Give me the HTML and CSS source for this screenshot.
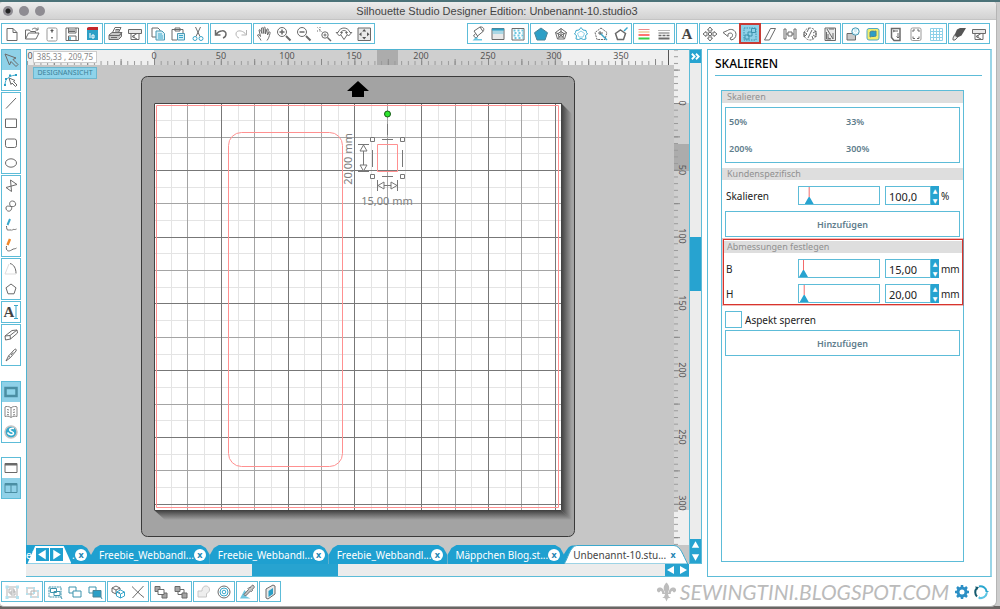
FILE: index.html
```html
<!DOCTYPE html>
<html lang="de">
<head>
<meta charset="utf-8">
<title>Silhouette Studio Designer Edition: Unbenannt-10.studio3</title>
<link rel="stylesheet" href="styles.css">
</head>
<body>
<div class="window">
  <header class="titlebar">
    <div class="lights"><i class="light light-close"></i><i class="light"></i><i class="light"></i></div>
    <h1 class="title">Silhouette Studio Designer Edition: Unbenannt-10.studio3</h1>
  </header>

  <nav class="toolbar toolbar-top">
    <div class="bar">
      <div class="group">
        <button aria-label="Neu"><svg viewBox="0 0 18 18"><path d="M4 3.500h6l4 4v8H4zM10 3.500v4h4"/></svg></button>
        <button aria-label="Öffnen"><svg viewBox="0 0 18 18"><path d="M2.500 14V5h4l1 1.500h5V8M2.500 14l3-6h10.500l-3 6zM9 4.500c2-2 4-1.500 5.500 0M15 2.500v2.500h-2.500"/></svg></button>
        <button aria-label="Bibliothek"><svg viewBox="0 0 18 18"><rect x="4" y="3" width="10" height="13" rx="1.500" stroke="#999"/><path class="dark" d="M9 4l2 2H7zM8.300 6h1.400v1.500H8.300zM8.300 12h1.400v1.500H8.300z"/></svg></button>
        <button aria-label="Speichern"><svg viewBox="0 0 18 18"><path d="M3 3h12.500v12.500H3zM5.500 3v5h7.500V3M5.500 15.500V11h7.500v4.500M6 5h6M6 6.500h6"/><path class="sky" d="M6 12h2v3H6z"/></svg></button>
        <button aria-label="In Bibliothek speichern"><svg viewBox="0 0 18 18"><path class="blue" d="M4 3l2-1h9v13H4z"/><path class="redfill" d="M4 3l2-1h9v3H4z"/><path class="white" d="M7 8v5M9 10h2v3H9z"/></svg></button>
      </div>
      <div class="group">
        <button aria-label="Drucken"><svg viewBox="0 0 18 18"><path class="mid" d="M3 10l3-2.500h10l-2.500 3H3zM3 10.500v4h9.500l3-3V8l-3 3"/><path d="M6.500 7.500L9 2.500h6l-2.500 5M9.500 4.500h4M9 6h4M5 12.500h6"/></svg></button>
        <button aria-label="Schneiden"><svg viewBox="0 0 18 18"><path class="pale" d="M2.500 4.500h13v4h-13z"/><path d="M5 8.500v6h8v-6M11 8.500l-5 3 5 2.500M8 10v3"/></svg></button>
      </div>
      <div class="group">
        <button aria-label="Kopieren"><svg viewBox="0 0 18 18"><path class="wf" d="M3 3h6l2 2v7H3z"/><path class="tint" d="M7 6h6l2.500 2.500V15H7z"/><path class="bl" d="M9 9h4M9 11h5M9 13h5"/></svg></button>
        <button aria-label="Einfügen"><svg viewBox="0 0 18 18"><path d="M3 4.500h11V8M3 4.500V15h5M6 4.500V3h5v3H6z"/><path class="tint" d="M8.500 8.500h7V15h-7z"/><path class="bl" d="M10 10.500h4M10 12.500h4"/></svg></button>
        <button aria-label="Ausschneiden"><svg viewBox="0 0 18 18"><path d="M6.500 2l4.500 9.500M11.500 2L7 11.500"/><circle class="bl" cx="6" cy="13.500" r="2"/><circle class="bl" cx="12" cy="13.500" r="2"/></svg></button>
      </div>
      <div class="group">
        <button aria-label="Rückgängig"><svg viewBox="0 0 18 18"><path class="thick" d="M3.500 5v5h5M4 9.500C7 5 14 4.500 14 9c0 2-1.500 3.500-3 4"/></svg></button>
        <button aria-label="Wiederholen"><svg class="faint" viewBox="0 0 18 18"><path d="M14.500 5v5h-5M14 9.500C11 5 4 4.500 4 9c0 2 1.500 3.500 3 4"/></svg></button>
      </div>
      <div class="group">
        <button aria-label="Verschieben"><svg viewBox="0 0 18 18"><path d="M6 15.500c-1-2.500-3-4-3.500-5.500 1-1 2 0 3 1.500L4 5c1-.8 1.500 0 2 1l1 2.500L6.500 3C7.500 2 8 3 8.200 4l.6 4.500V2.500c1-.8 1.700 0 1.500 1L10.500 9l1.500-5c1-.5 1.500 0 1.200 1L12.500 10l1.500-3c1-.3 1.500.5 1 1.500-1 3-1 4.500-3 7"/></svg></button>
        <button aria-label="Vergrößern"><svg viewBox="0 0 18 18"><circle cx="7" cy="7" r="4.500"/><path class="heavy" d="M11 11l4.500 4.500"/><path class="thick" d="M4.500 7h5M7 4.500v5"/></svg></button>
        <button aria-label="Verkleinern"><svg viewBox="0 0 18 18"><circle cx="7" cy="7" r="4.500"/><path class="heavy" d="M11 11l4.500 4.500"/><path class="thick" d="M4.500 7h5"/></svg></button>
        <button aria-label="Auswahl zoomen"><svg viewBox="0 0 18 18"><circle cx="10" cy="10" r="3.200"/><path class="thick" d="M12.500 12.500l3.500 3.500"/><path stroke-dasharray="1 1.500" d="M2 6h5M5 2v5M2.500 2.500l4 4"/><path d="M8.500 10h3M10 8.500v3"/></svg></button>
        <button aria-label="Zoom ziehen"><svg viewBox="0 0 18 18"><path d="M3 7.500c1-3 3.500-4.500 6-4.500s5 1.500 6 4.500h1.800L13.500 11 10.500 7.500h2C11.500 6 10 5.500 9 5.500S6.500 6 5.500 7.500h2L4.500 11 1.200 7.500zM6 10l3 4.500 3-4.500"/></svg></button>
        <button aria-label="Einpassen"><svg viewBox="0 0 18 18"><path class="pale" d="M3 3h12.500v12.500H3z"/><path class="dark" d="M9.200 4l2 2.500h-4zM9.200 14.500l2-2.500h-4zM4 9.200l2.500-2v4zM14.500 9.200l-2.500-2v4z"/></svg></button>
      </div>
    </div>
    <div class="bar">
      <div class="group">
        <button aria-label="Füllfarbe"><svg viewBox="0 0 18 18"><path d="M5 6l6-4 3 4.500L8.500 11zM11 2c3-.5 5 2 3 4.500M6.500 8.500L4.500 11l2.500 2 2-2"/><path class="sky" d="M3.500 15.500l3-3h3l-1.500 1.500h5v1.500z"/></svg></button>
        <button aria-label="Verlauf"><svg viewBox="0 0 18 18"><path class="pale" d="M3 3.500h12v11H3z"/><path class="sky" d="M3.500 4h11v5h-11z" opacity=".5"/><path class="blue" d="M3 3.500h12v2H3z"/></svg></button>
        <button aria-label="Muster"><svg viewBox="0 0 18 18"><path d="M3 3.500h12v11.500H3z"/><path class="skydots" d="M4.500 5.500h10M5.500 8h9M4.500 10.500h10M5.500 13h9"/></svg></button>
      </div>
      <div class="group">
        <button aria-label="Füllung Polygon"><svg viewBox="0 0 18 18"><path class="bluefill" d="M9 3l6.500 4.700L13 15H5L2.500 7.700z"/></svg></button>
        <button aria-label="Wabe"><svg viewBox="0 0 18 18"><path d="M9 3.500l5.500 4-2 6.500h-7l-2-6.500zM9 6.500l3 2-1 3.500H7L6 8.500zM9 3.500V9M3.500 7.500L9 10M14.500 7.500L9 10M5.500 14L9 10M12.500 14L9 10"/></svg></button>
        <button aria-label="Schatten"><svg viewBox="0 0 18 18"><path class="bl" d="M9 2.500l2 2.500 3 .5.500 2 1 1.500-2 1.500.5 3.500-2.500.5-2.500-1-2.500 1-2.500-.5.500-3.500-2-1.500 1-1.500.5-2 3-.5z"/><path class="sl" d="M9 6l3.500 2.500-1.500 3.500H7L5.500 8.500z"/></svg></button>
        <button aria-label="Skizze"><svg viewBox="0 0 18 18"><path stroke-dasharray="2 .8" d="M9 3l6 4.500-2 7H5l-2-7z"/><path class="bl thick" d="M8 8l7 7"/><path d="M6 8h5M8 6v4"/></svg></button>
        <button aria-label="Strass"><svg viewBox="0 0 18 18"><path class="thick" d="M8.500 5l5 3.500-2 6h-6l-2-6z"/><path class="bl thick" d="M12 6l3.500-3.500"/></svg></button>
      </div>
      <div class="group">
        <button aria-label="Linienfarbe"><svg viewBox="0 0 18 18"><path stroke="#ee8a8a" d="M3.500 4.500h11"/><path stroke="#e5b46a" d="M3.500 7h11"/><path stroke="#ff4545" stroke-width="1.500" d="M3.500 10h11"/><path stroke="#38d048" stroke-width="2" d="M3.500 13.500h11"/></svg></button>
        <button aria-label="Linienstil"><svg viewBox="0 0 18 18"><path stroke-dasharray="1 1" d="M3.500 5.500h11"/><path d="M3.500 8h11"/><path class="thick" stroke-dasharray="3 1" d="M3.500 10.500h11"/><path class="heavy" d="M3.500 13.500h11"/></svg></button>
      </div>
      <div class="group"><button class="serif" aria-label="Textstil">A</button></div>
      <div class="group">
        <button aria-label="Bewegen"><svg viewBox="0 0 18 18"><path d="M9 2l2.500 3H10v2.500H8V5H6.500zM9 16l2.500-3H10v-2.500H8V13H6.500zM2 9l3-2.500V8h2.500v2H5v1.500zM16 9l-3-2.500V8h-2.500v2H13v1.500z"/></svg></button>
        <button aria-label="Drehen"><svg viewBox="0 0 18 18"><path d="M2 7.500l5 4V9c2.500-2 5-.5 4.500 1.500 0 1.500-1 2-2.500 2.500l1 2c3-.5 5-2.500 5-5.500 0-4.500-5-6.500-8.500-4z"/></svg></button>
        <button class="on marked" aria-label="Skalieren"><svg class="teal" viewBox="0 0 18 18"><path stroke-dasharray="1.500 1" d="M3 3h12v12H3z"/><path d="M4 10h4v4H4zM7 7h4v4H7zM10.500 3.500h4v4h-4z"/></svg></button>
        <button aria-label="Neigen"><svg viewBox="0 0 18 18"><path d="M9.500 3.500h5l-6 11.500h-5z"/></svg></button>
        <button aria-label="Ausrichten"><svg viewBox="0 0 18 18"><path d="M3 4v10h2V4zM13 4v10h2V4zM7 7h4v4H7zM5 9h2M11 9h2"/></svg></button>
        <button aria-label="Replizieren"><svg viewBox="0 0 18 18"><path stroke-dasharray="2 1" d="M9 3a6 6 0 1 0 .1 0"/><path d="M6 9l-3 3V7zM11 5L7 13M12 8l3-2v6l-3-2M8 3L6 7M12 14l-1-3"/></svg></button>
        <button aria-label="Verschachteln"><svg viewBox="0 0 18 18"><path class="pale" d="M4 3h10.500v12.500H4z"/><path d="M6 4l6 10V8M8 4h5M5.500 7v7h4M7 9v4l3 1"/></svg></button>
      </div>
      <div class="group">
        <button aria-label="Modifizieren"><svg viewBox="0 0 18 18"><path class="mid" d="M3 8.500h8.500V15H3z"/><circle class="tint" cx="11.500" cy="6.500" r="3.700"/><path class="white" d="M9.500 5v2l2 1 2-1V5"/></svg></button>
        <button aria-label="Nachzeichnen"><svg viewBox="0 0 18 18"><rect class="yellow" x="3" y="3.500" width="12" height="11.500" rx="2"/><path class="bluefill" d="M6 7c2-2 4 0 6-1v5c-2 1-4 0-6 1z"/></svg></button>
      </div>
      <div class="group">
        <button aria-label="Seite"><svg viewBox="0 0 18 18"><path class="thick" d="M4.500 3.500h8.500v12H7l-2.500-3z"/><path d="M7 6h4M6 5l1.500 1L6 7M11 8v5M9.500 11.500L11 13l1.500-1.500"/></svg></button>
        <button aria-label="Passmarken"><svg viewBox="0 0 18 18"><rect x="4" y="3" width="10" height="12.500" rx="1.500" stroke="#999"/><path d="M6 7V5h2M12 7V5h-2M6 11.500v2h2M12 11.500v2h-2"/></svg></button>
        <button aria-label="Raster"><svg viewBox="0 0 18 18"><path class="sl" d="M3.500 3.500h12v12h-12zM6.500 3.500v12M9.500 3.500v12M12.500 3.500v12M3.500 6.500h12M3.500 9.500h12M3.500 12.500h12"/></svg></button>
      </div>
      <div class="group">
        <button aria-label="Schneideeinstellungen"><svg viewBox="0 0 18 18"><path class="dark" d="M7 4.500l3-1.500h6l-4.500 7.500-4 2L4.500 10z"/><path class="pale" d="M4.500 10l3 2.500L5 15H3v-2z"/></svg></button>
        <button aria-label="An Silhouette senden"><svg viewBox="0 0 18 18"><path class="pale" d="M2.500 4.500h13v4h-13z"/><path d="M5 8.500v6h8v-6M11 8.500l-5 3 5 2.500M8 10v3"/></svg></button>
      </div>
    </div>
  </nav>

  <main class="main">
    <aside class="tools">
      <div class="group">
        <button class="on" aria-label="Auswählen"><svg viewBox="0 0 18 18"><path d="M3 3l11 4-3 1.500 5 5-2 2-5-5L7.500 14z"/></svg></button>
        <button aria-label="Punkte bearbeiten"><svg viewBox="0 0 18 18"><path class="bl" d="M3 15c0-5 1-10 11-11"/><path class="blue" d="M2 13h2v2H2zM3 7h2v2H3zM7 3.500h2v2H7zM13 3h2v2h-2z"/><path class="wf" d="M7 7l6 2.500-1.500 1 3.500 3.500-1.500 1.500-3.500-3.500-1 1.500z"/></svg></button>
      </div>
      <div class="group">
        <button aria-label="Linie"><svg viewBox="0 0 18 18"><path d="M4 14.500L14 4"/></svg></button>
        <button aria-label="Rechteck"><svg viewBox="0 0 18 18"><path d="M3.500 5h11v8.500h-11z"/></svg></button>
        <button aria-label="Abgerundetes Rechteck"><svg viewBox="0 0 18 18"><rect x="3.500" y="5" width="11" height="8.500" rx="2"/></svg></button>
        <button aria-label="Ellipse"><svg viewBox="0 0 18 18"><ellipse cx="9" cy="9" rx="5.500" ry="4.200"/></svg></button>
      </div>
      <div class="group">
        <button aria-label="Polygon"><svg viewBox="0 0 18 18"><path d="M8.500 3l1 11.500-5.500-4L15 7.500z"/></svg></button>
        <button aria-label="Kurve"><svg viewBox="0 0 18 18"><path d="M9 9.500C7 8 7 4 10.500 4S15 9 11.500 9.500 4 7.500 4 11s4 4 5 2 1-2.500 0-3.500z"/></svg></button>
        <button aria-label="Freihand"><svg viewBox="0 0 18 18"><path class="bl heavy" d="M5.500 8L8 2"/><path d="M4.500 9c0 3 1 5 2 4s1 1 2 0 1 1.500 2 0 1 0 2-.5 1 .5 2-.5"/></svg></button>
        <button aria-label="Glatte Freihand"><svg viewBox="0 0 18 18"><path stroke="#f0882a" stroke-width="2.500" d="M5.500 8L8 2"/><path d="M4.500 9c-1 5 2 6 5 4s3-.5 5-2"/></svg></button>
      </div>
      <div class="group">
        <button aria-label="Bogen"><svg viewBox="0 0 18 18"><path d="M8 3.500c4 1 6 5 6 10"/><path stroke="#ddd" d="M7 4L3 14h11"/></svg></button>
        <button aria-label="Regelmäßiges Polygon"><svg viewBox="0 0 18 18"><path d="M9 4l5 3.800-2 6H6l-2-6z"/></svg></button>
      </div>
      <div class="group"><button class="serif text-tool" aria-label="Text">A<svg viewBox="0 0 4 14"><path class="bl" d="M0 .5h4M2 0v13M0 13.500h4"/></svg></button></div>
      <div class="group">
        <button aria-label="Radiergummi"><svg viewBox="0 0 18 18"><path d="M3 10l7-5.500 5-.5.500 3-7 6-5 1zM3 10l5-.5 7-5.500M8 9.500l.5 3.500"/></svg></button>
        <button aria-label="Messer"><svg viewBox="0 0 18 18"><path d="M12.500 3.500c1-1 2.500 0 1.500 1.500L8.500 11.500l-2-1.500zM6.500 10L4 15l4.500-3.500M9 9l2-2.500"/></svg></button>
      </div>
      <div class="group apart">
        <button class="on" aria-label="Designansicht"><svg viewBox="0 0 18 18"><path fill="#8fd4ea" stroke="#4a8ea3" stroke-width="2.500" d="M3.500 5h11v8h-11z"/></svg></button>
        <button aria-label="Bibliotheksansicht"><svg viewBox="0 0 18 18"><path stroke="#888" d="M3 4l1-.5c2 0 4 0 5 1.500 1-1.500 3-1.500 5-1.500l1 .5v9.500c-2-.5-4-.5-6 1-2-1.500-4-1.500-6-1zM9 5v9M5 6.500l2 .5M5 9l2 .5M11 7l2-.5M11 9.500l2-.5M5 11.500l2 .3M11 12l2-.5"/></svg></button>
        <button aria-label="Store"><svg viewBox="0 0 18 18"><circle cx="9" cy="9" r="6" fill="#35a9cc" stroke="#c4c4c4" stroke-width="1.500"/><path class="white" stroke-width="1.500" d="M12 5.500c-3-.5-5 .5-4 2s4 1 3.500 3S7 12 5.500 9.500"/></svg></button>
      </div>
      <div class="group apart">
        <button aria-label="Einzelfenster"><svg viewBox="0 0 18 18"><path d="M3 4.500h12v9H3z"/><path class="heavy" d="M3 5.500h12"/></svg></button>
        <button class="on" aria-label="Geteiltes Fenster"><svg viewBox="0 0 18 18"><path stroke="#4a8ea3" d="M3 4.500h12v9H3zM9 4.500v9"/><path stroke="#4a8ea3" stroke-width="2" d="M3 5.500h12"/></svg></button>
      </div>
    </aside>

    <section class="document">
      <div class="view">
        <svg class="ruler-top" viewBox="27 50 647 15">
          <defs>
            <pattern id="tx" x="154" y="50" width="6.680" height="15" patternUnits="userSpaceOnUse"><path d="M.5 11v4" stroke="#999"/></pattern>
            <pattern id="tx2" x="154" y="50" width="33.400" height="15" patternUnits="userSpaceOnUse"><path d="M.5 9v6" stroke="#888"/></pattern>
          </defs>
          <path fill="#efefef" d="M27 50h647v15H27z"/>
          <path fill="#cfcfcf" d="M154 50h407v15H154z"/>
          <path fill="#acacac" d="M377 50h21v15h-21z"/>
          <path fill="url(#tx)" d="M27 50h641v15H27z"/>
          <path fill="url(#tx2)" d="M27 50h641v15H27z"/>
          <path stroke="#555" d="M668.500 50v15"/>
          <g class="ruler-text"><text x="30" y="59">0</text><text x="154" y="59">0</text><text x="221" y="59">50</text><text x="287" y="59">100</text><text x="354" y="59">150</text><text x="421" y="59">200</text><text x="488" y="59">250</text><text x="554" y="59">300</text><text x="621" y="59">350</text></g>
        </svg>
        <div class="stage">
          <svg class="mat" viewBox="27 65 647 480">
            <defs>
              <linearGradient id="s1"><stop offset="0" stop-color="#3c3c3c"/><stop offset="1" stop-color="#a3a3a3"/></linearGradient>
              <linearGradient id="s2" x2="0" y2="1"><stop offset="0" stop-color="#3c3c3c"/><stop offset="1" stop-color="#a3a3a3"/></linearGradient>
            </defs>
            <rect x="141.500" y="76.500" width="433" height="460" rx="6" fill="#a3a3a3" stroke="#3a3a3a"/>
            <path fill="url(#s1)" d="M561 103l11 11v406l-11-10z"/>
            <path fill="url(#s2)" d="M154 510h407l11 10H165z"/>
            <path fill="#000" d="M358 81l11 10h-5v6h-12v-6h-5z"/>
            <path fill="#fff" d="M154 103h407v407H154z"/>
            <g fill="none">
              <path stroke="#e4e4e4" d="M171.500 103v407M204.500 103v407M238.500 103v407M271.500 103v407M304.500 103v407M338.500 103v407M371.500 103v407M405.500 103v407M438.500 103v407M471.500 103v407M505.500 103v407M538.500 103v407M154 120.500h407M154 153.500h407M154 187.500h407M154 220.500h407M154 253.500h407M154 287.500h407M154 320.500h407M154 354.500h407M154 387.500h407M154 420.500h407M154 454.500h407M154 487.500h407"/>
              <path stroke="#a4a4a4" d="M187.500 103v407M254.500 103v407M321.500 103v407M387.500 103v407M455.500 103v407M521.500 103v407M154 137.500h407M154 203.500h407M154 270.500h407M154 337.500h407M154 404.500h407M154 470.500h407"/>
              <path stroke="#777" d="M221.500 103v407M288.500 103v407M354.500 103v407M421.500 103v407M488.500 103v407M555.500 103v407M154 170.500h407M154 237.500h407M154 303.500h407M154 370.500h407M154 437.500h407M154 504.500h407"/>
            </g>
            <path fill="none" stroke="#444" d="M154.500 510V103.500H561.500V510"/>
            <g fill="none" stroke="#ff9090"><path d="M156.500 105.500h402v402h-402z"/><rect x="228.500" y="132.500" width="114" height="334" rx="13"/><path d="M377.500 144.500h20v27h-20z"/></g>
            <g fill="none" stroke="#777">
              <path d="M387.500 124v11M382 139.500h11M382 176.500h11M372.500 150v17M402.500 150v17M358 144.500h11M358 171.500h11M363.500 151v14M377.500 180v11M397.500 180v11M383 185.500h9"/>
              <path fill="#fff" d="M363.500 145l3.500 6h-7zM363.500 171l3.500-6h-7zM378 185.500l6-3.500v7zM397 185.500l-6-3.500v7z"/>
              <path fill="#fff" d="M370.500 137.500h4v4h-4zM400.500 137.500h4v4h-4zM370.500 174.500h4v4h-4zM400.500 174.500h4v4h-4z"/>
            </g>
            <circle cx="387.500" cy="114" r="3" fill="#2ee62e" stroke="#155c15"/>
            <g class="dim-text"><text x="387" y="205">15,00 mm</text><text transform="translate(352 159) rotate(-90)">20,00 mm</text></g>
          </svg>
          <span class="view-name">DESIGNANSICHT</span>
        </div>
        <svg class="ruler-side" viewBox="674 50 15 500">
          <defs>
            <pattern id="ty" x="674" y="103" width="15" height="6.680" patternUnits="userSpaceOnUse"><path d="M0 .5h4" stroke="#999"/></pattern>
            <pattern id="ty2" x="674" y="103" width="15" height="33.400" patternUnits="userSpaceOnUse"><path d="M0 .5h6" stroke="#888"/></pattern>
          </defs>
          <path fill="#efefef" d="M674 50h15v500h-15z"/>
          <path fill="#cfcfcf" d="M674 103h15v407h-15z"/>
          <path fill="#acacac" d="M674 144h15v27h-15z"/>
          <path fill="url(#ty)" d="M674 50h15v500h-15z"/>
          <path fill="url(#ty2)" d="M674 50h15v500h-15z"/>
          <g class="ruler-text"><text transform="translate(679 103) rotate(90)">0</text><text transform="translate(679 170) rotate(90)">50</text><text transform="translate(679 236) rotate(90)">100</text><text transform="translate(679 303) rotate(90)">150</text><text transform="translate(679 370) rotate(90)">200</text><text transform="translate(679 437) rotate(90)">250</text><text transform="translate(679 503) rotate(90)">300</text></g>
        </svg>
        <output class="coords">385,33 , 209,75</output>
      </div>

      <div class="vscroll">
        <button class="expand" aria-label="Panel ausblenden"><svg viewBox="0 0 12 13"><path d="M2 3.500l3 3-3 3M6.500 3.500l3 3-3 3"/></svg></button>
        <div class="track"><div class="thumb"></div></div>
        <button class="arrow" aria-label="Nach oben"><svg viewBox="0 0 12 12"><path d="M6 2l4 7H2z"/></svg></button>
        <button class="arrow" aria-label="Nach unten"><svg viewBox="0 0 12 12"><path d="M6 10l4-7H2z"/></svg></button>
      </div>

      <div class="tabs">
        <div class="tab tab-first">
          <span class="tab-part">ei</span>
          <div class="tab-nav"><button aria-label="Vorherige Tabs"><svg viewBox="0 0 12 12"><path d="M2 6l7-4.500v9z"/></svg></button><button aria-label="Nächste Tabs"><svg viewBox="0 0 12 12"><path d="M10 6L3 1.500v9z"/></svg></button></div>
          <span class="tab-dot">.</span><button class="close" aria-label="Schließen">x</button>
        </div>
        <div class="tab"><span>Freebie_Webbandl...</span><button class="close" aria-label="Schließen">x</button></div>
        <div class="tab"><span>Freebie_Webbandl...</span><button class="close" aria-label="Schließen">x</button></div>
        <div class="tab"><span>Freebie_Webbandl...</span><button class="close" aria-label="Schließen">x</button></div>
        <div class="tab"><span>Mäppchen Blog.st...</span><button class="close" aria-label="Schließen">x</button></div>
        <div class="tab-current"><svg viewBox="0 0 127 19" preserveAspectRatio="none"><path class="tab-edge" d="M0 9v10C4 14 6 1 13 .5H9C4 1 3 5 0 9z"/><path d="M0 19C4 14 6 1 13 .5h99c7 .5 9 10 14 18.500z"/></svg><span>Unbenannt-10.stu...</span><button class="close" aria-label="Schließen">x</button></div>
      </div>

      <div class="hscroll">
        <div class="track"><div class="thumb"></div></div>
        <button class="arrow" aria-label="Nach links"><svg viewBox="0 0 12 12"><path d="M2 6l7-4v8z"/></svg></button>
        <button class="arrow" aria-label="Nach rechts"><svg viewBox="0 0 12 12"><path d="M10 6L3 2v8z"/></svg></button>
      </div>
    </section>

    <aside class="panel">
      <h2 class="panel-title">SKALIEREN</h2>
      <form class="panel-body">
        <h3 class="strip">Skalieren</h3>
        <div class="presets"><button type="button">50%</button><button type="button">33%</button><button type="button">200%</button><button type="button">300%</button></div>
        <h3 class="strip">Kundenspezifisch</h3>
        <div class="field">
          <label for="scale">Skalieren</label>
          <input class="slider" type="range" min="0" max="100" value="8" aria-label="Skalieren Regler">
          <input class="number" id="scale" type="text" value="100,0">
          <span class="spin"><button type="button" aria-label="Mehr">▲</button><button type="button" aria-label="Weniger">▼</button></span>
          <span class="unit">%</span>
        </div>
        <button class="apply" type="button">Hinzufügen</button>
        <div class="dimensions">
          <h3 class="strip">Abmessungen festlegen</h3>
          <div class="field">
            <label for="width">B</label>
            <input class="slider" type="range" min="0" max="100" value="0" aria-label="Breite Regler">
            <input class="number" id="width" type="text" value="15,00">
            <span class="spin"><button type="button" aria-label="Mehr">▲</button><button type="button" aria-label="Weniger">▼</button></span>
            <span class="unit">mm</span>
          </div>
          <div class="field">
            <label for="height">H</label>
            <input class="slider" type="range" min="0" max="100" value="1" aria-label="Höhe Regler">
            <input class="number" id="height" type="text" value="20,00">
            <span class="spin"><button type="button" aria-label="Mehr">▲</button><button type="button" aria-label="Weniger">▼</button></span>
            <span class="unit">mm</span>
          </div>
        </div>
        <label class="check"><input type="checkbox">Aspekt sperren</label>
        <button class="apply" type="button">Hinzufügen</button>
      </form>
    </aside>
  </main>

  <footer class="toolbar toolbar-bottom">
    <div class="bar">
      <div class="group">
        <button aria-label="Gruppieren"><svg class="faint" viewBox="0 0 18 18"><path d="M4 4h10v10H4zM6 6h5v4H6zM8 8h4v4H8z"/><path class="sky" d="M2.500 2.500h3v3h-3zM13 2.500h3v3h-3zM2.500 13h3v3h-3zM13 13h3v3h-3z"/></svg></button>
        <button aria-label="Gruppierung aufheben"><svg class="faint" viewBox="0 0 18 18"><path d="M4 5h7v6H4zM8 8h7v6H8z"/><path class="sky" d="M3 4h2v2H3zM10 4h2v2h-2zM3 10h2v2H3zM7 13h2v2H7zM14 7h2v2h-2zM14 13h2v2h-2zM10 9h2v2h-2z"/></svg></button>
      </div>
      <div class="group">
        <button aria-label="Alles auswählen"><svg class="teal" viewBox="0 0 18 18"><path stroke-dasharray="2 .6" d="M3 4h12v10H3z"/><path d="M4.500 5.500h6v4h-6zM8 8.500h6v4H8zM15 14l1 2"/></svg></button>
        <button aria-label="Auswahl aufheben"><svg class="teal" viewBox="0 0 18 18"><path d="M3 4h7v6H3z"/><path class="wf" d="M7 8h8v6H7z"/></svg></button>
        <button aria-label="Nach Farbe"><svg class="teal" viewBox="0 0 18 18"><path d="M3 4h7v6H3z"/><path class="bluefill" d="M7 7.500h8V14H7z"/><path d="M15 14l1 2"/></svg></button>
      </div>
      <div class="group">
        <button aria-label="Duplizieren"><svg viewBox="0 0 18 18"><path d="M3 5l4-2 4 2v4l-4 2-4-2zM3 5l4 2 4-2M7 7v4"/><path class="bl wf" d="M7.500 9l4-2 4 2v4l-4 2-4-2zM7.500 9l4 2 4-2M11.500 11v4"/></svg></button>
        <button aria-label="Löschen"><svg viewBox="0 0 18 18"><path d="M3 3.500c3 3 8 8 12 11M14.500 3L3.500 15"/></svg></button>
      </div>
      <div class="group">
        <button aria-label="Nach vorne"><svg viewBox="0 0 18 18"><path class="grey" d="M3 3.500h5v5H3zM10 10h5v5h-5z"/><path class="wf" d="M6 6.500h6v5H6z"/></svg></button>
        <button aria-label="Nach hinten"><svg viewBox="0 0 18 18"><path class="wf" d="M6 6.500h6v5H6z"/><path class="grey" d="M3 3.500h5v5H3zM10 10h5v5h-5z"/></svg></button>
      </div>
      <div class="group">
        <button aria-label="Verschweißen"><svg viewBox="0 0 18 18"><path stroke="#c6c6c6" fill="#eee" d="M3 8h4c0-7 8-6 7.500-1 0 2-2 3-3 3.500V14H3z"/></svg></button>
        <button aria-label="Offset"><svg viewBox="0 0 18 18"><circle cx="9" cy="9" r="6"/><circle class="bl" cx="9" cy="9" r="4"/><circle class="bl" cx="9" cy="9" r="1.800"/></svg></button>
      </div>
      <div class="group"><button aria-label="Pipette"><svg viewBox="0 0 18 18"><path class="sky" d="M2 15.500L6.500 7l3 4-2 2 5 2.500z"/><path class="mid" d="M15.500 2.500c1.500 1.500.5 3-1.500 4l.5 1-1 1-1-.5L7.500 13l-1.500-1.500L10.500 6.500 10 5.500l1-1 1 .5c1-2 2.500-3.500 3.500-2.500z"/></svg></button></div>
      <div class="group"><button aria-label="3D"><svg viewBox="0 0 18 18"><path class="pale" d="M5 6l7-4 2 1v8l-7 5-2-1z"/><path class="blue" d="M7.500 8l4.500-3v6l-4.500 3z"/></svg></button></div>
    </div>
    <div class="brand">
      <svg class="lily" viewBox="0 0 22 20"><path d="M11 0c3 3 4 6 1.500 10.500h1c0-5 6-7 7.500-3 .5 3-3 4-3.500 1.500-2 0-2 2-2 3h-3l1 3 2 1-3 .5L11 20l-1.500-3.500-3-.5 2-1 1-3h-3c0-1 0-3-2-3C4 11.500.5 10.500 1 7.500c1.500-4 7.500-2 7.500 3h1C7 6 8 3 11 0z"/></svg>
      <span class="brand-name">SEWINGTINI.BLOGSPOT.COM</span>
      <button aria-label="Einstellungen"><svg viewBox="0 0 16 16"><circle cx="8" cy="8" r="4" fill="none" stroke="#2c8fc5" stroke-width="3"/><path stroke="#2c8fc5" stroke-width="2.500" d="M8 1v2M8 13v2M1 8h2M13 8h2M3 3l1.500 1.500M11.500 11.500L13 13M13 3l-1.500 1.500M3 13l1.500-1.500"/></svg></button>
      <button aria-label="Aktualisieren"><svg viewBox="0 0 16 16" fill="none" stroke-width="2"><path stroke="#155a6e" d="M4 12.500A6 6 0 0 1 4 4"/><path stroke="#2aa7cf" d="M6 2.500a6 6 0 0 1 7.500 4.500"/><path stroke="#5cc5e4" d="M13.800 9A6 6 0 0 1 6 13.800"/><path fill="#155a6e" d="M2 2.500l4 .5-2 3z"/><path fill="#2aa7cf" d="M12 7h4l-2 2z"/><path fill="#5cc5e4" d="M7 12v3.500l-2-1.500z"/></svg></button>
    </div>
  </footer>
</div>
</body>
</html>
```
FILE: styles.css
```css
* { box-sizing: border-box; }
body {
  margin: 0;
  height: 100vh;
  padding: 2px 3px 2px 0;
  background: linear-gradient(#4b7278 2px, #cdcdcd 2px, #cdcdcd calc(100% - 3px), #6a6664 calc(100% - 3px));
  font-family: "Noto Sans", "Open Sans", sans-serif;
  font-size: 10px;
  color: #222;
}
button {
  margin: 0;
  padding: 0;
  border: 0;
  background: none;
  font: inherit;
  color: inherit;
}
svg { display: block; }
h1, h2, h3 { margin: 0; font-weight: 400; }

.window {
  height: 100%;
  display: flex;
  flex-direction: column;
  background: #fff;
  border-right: 1px solid #b5b5b5;
  border-bottom: 1px solid #aaa;
  border-radius: 4px 4px 6px 4px;
  overflow: hidden;
}
.titlebar {
  display: flex;
  align-items: center;
  height: 18px;
  flex: none;
  padding: 0 3px;
  background: linear-gradient(#ececec, #d2d2d2);
  border-bottom: 1px solid #c4c4c4;
}
.lights { display: flex; gap: 6px; width: 45px; }
.light { width: 10px; height: 10px; border-radius: 50%; background: #8e8c92; }
.light-close { background: radial-gradient(#222 2px, #8e8c92 3px); }
.title {
  flex: 1;
  padding-right: 47px;
  text-align: center;
  font: 11px/16px "Liberation Sans", Arial, sans-serif;
  color: #444;
}

/* Icon groups */
.toolbar { display: flex; justify-content: space-between; flex: none; }
.toolbar-top { padding: 3px 6px 4px 1px; }
.toolbar-bottom { padding: 4px 5px 4px 1px; align-items: center; }
.bar { display: flex; gap: 1px; }
.group { display: flex; border: 1px solid #5dbcd8; background: #fff; }
.group button {
  display: flex;
  align-items: center;
  justify-content: center;
  width: 20px;
  height: 19px;
}
.group svg {
  width: 18px;
  height: 18px;
  flex: none;
  fill: none;
  stroke: #6a6a6a;
  stroke-width: 1;
}
.group .on { background: #8fd1e8; }
.group .marked { outline: 2px solid #c93a34; outline-offset: -1px; }
.group .serif { font: bold 15px/18px "Liberation Serif", serif; color: #444; }
.group .text-tool svg { width: 4px; height: 14px; }
.group .faint { opacity: .5; }
.group .teal { stroke: #3d93ad; }
.thick { stroke-width: 1.5; }
.heavy { stroke-width: 2; }
.bl { stroke: #3aa7cb; }
.sl { stroke: #8fd1e8; }
.blue, .bluefill { fill: #2c9fc6; stroke: none; }
.bluefill { stroke: #4a8497; }
.sky { fill: #6dc6e0; stroke: none; }
.skydots { stroke: #6dc6e0; stroke-width: 2; stroke-dasharray: 2 2; }
.tint { fill: #d4eef6; stroke: #4a9ab5; }
.pale { fill: #e9e9e9; }
.mid { fill: #c8c8c8; }
.grey { fill: #a5a5a5; }
.dark { fill: #555; stroke: none; }
.white { stroke: #fff; }
.wf { fill: #fff; }
.redfill { fill: #c3272b; stroke: none; }
.yellow { fill: #f4ee6a; stroke: #55a9c4; }

.main { display: flex; flex: 1; min-height: 0; }
.tools { display: flex; flex-direction: column; gap: 1px; width: 26px; padding: 1px 5px 0 1px; }
.tools .group { flex-direction: column; }
.tools .group button { width: 18px; height: 20px; }
.tools .apart { margin-top: 14px; }
.tools .apart + .apart { margin-top: 13px; }

/* Document area */
.document {
  flex: 1;
  min-width: 0;
  display: grid;
  grid-template-columns: minmax(0, 1fr) 13px;
  grid-template-rows: minmax(0, 1fr) 19px 13px;
  padding-top: 1px;
}
.view {
  position: relative;
  display: grid;
  grid-template-columns: minmax(0, 1fr) 15px;
  grid-template-rows: 15px minmax(0, 1fr);
  border: 1px solid #4fb3d1;
  border-width: 1px 0 0 1px;
  background: #c6c6c6;
  overflow: hidden;
}
.ruler-top { width: 647px; height: 15px; grid-column: 1; grid-row: 1; }
.ruler-side { width: 15px; height: 500px; grid-column: 2; grid-row: 1 / 3; }
.stage { position: relative; grid-column: 1; grid-row: 2; overflow: hidden; }
.mat { width: 647px; height: 480px; }
.ruler-text { font-size: 9px; fill: #555; text-anchor: middle; }
.dim-text { font-size: 11px; fill: #808080; text-anchor: middle; }
.coords, .view-name {
  position: absolute;
  left: 6px;
  width: 64px;
  height: 12px;
  font-size: 8px;
  line-height: 10px;
  text-align: center;
  white-space: nowrap;
}
.coords { top: 1px; border: 1px solid #ccc; background: #fff; color: #888; }
.view-name { top: 2px; border: 1px solid #6cb7cf; background: #8fd3ea; color: #3a7f97; font-size: 7px; }

.vscroll { grid-column: 2; grid-row: 1 / 3; display: flex; flex-direction: column; border: 1px solid #5dbcd8; }
.vscroll .track { flex: 1; background: #ececec; }
.vscroll .thumb { margin-top: 174px; height: 54px; background: #27a3d0; }
.expand { height: 13px; background: #27a3d0; }
.expand svg { width: 11px; height: 13px; fill: none; stroke: #fff; stroke-width: 2; }
.arrow { width: 12px; height: 12px; background: #27a3d0; }
.arrow svg { width: 12px; height: 12px; fill: #fff; }
.vscroll .arrow { width: 11px; }
.vscroll .arrow svg { width: 11px; }
.hscroll { grid-column: 1; display: flex; border-bottom: 1px solid #5dbcd8; }
.hscroll .track { flex: 1; background: #ececec; }
.hscroll .thumb { margin-left: 226px; width: 86px; height: 12px; background: #27a3d0; }

.tabs {
  grid-column: 1;
  display: flex;
  background: #c6c6c6;
  font-size: 10px;
  line-height: 18px;
  color: #fff;
  overflow: hidden;
}
.tab {
  display: flex;
  align-items: center;
  justify-content: space-between;
  flex: 119 1 0;
  padding: 0 4px 0 8px;
  background: #1fa0d0;
  white-space: nowrap;
  clip-path: polygon(0 10px, 4px 3px, 9px 0, calc(100% - 9px) 0, calc(100% - 4px) 3px, 100% 10px, 100% 100%, 0 100%);
}
.tab-first {
  flex: 0 0 65px;
  padding-left: 0;
  clip-path: polygon(0 0, calc(100% - 9px) 0, calc(100% - 4px) 3px, 100% 10px, 100% 100%, 0 100%);
}
.tab-part { width: 4px; }
.tab-nav {
  display: flex;
  justify-content: center;
  align-items: center;
  gap: 1px;
  width: 44px;
  height: 18px;
  margin-left: -3px;
  background: #fff;
  clip-path: polygon(8px 0, 36px 0, 100% 100%, 0 100%);
}
.tab-nav button { width: 13px; height: 13px; background: #1fa0d0; }
.tab-nav svg { width: 13px; height: 13px; fill: #fff; }
.close {
  width: 12px;
  height: 12px;
  flex: none;
  border-radius: 50%;
  background: #fff;
  font: bold 9px/11px "Noto Sans", sans-serif;
  color: #1f86b3;
}
.tab-current {
  position: relative;
  display: flex;
  align-items: center;
  justify-content: space-between;
  flex: 127 1 0;
  padding: 0 10px 0 9px;
  color: #444;
  white-space: nowrap;
}
.tab-current > svg { position: absolute; inset: 0; width: 100%; height: 19px; fill: #fff; stroke: #3aa7cb; }
.tab-current .tab-edge { fill: #1fa0d0; stroke: none; }
.tab-current > span, .tab-current > button { position: relative; }

/* Side panel */
.panel {
  flex: 0 0 285px;
  display: flex;
  flex-direction: column;
  margin: 1px 4px 0 5px;
  padding: 7px 8px 14px 7px;
  border: 1px solid #5dbcd8;
  border-right: 2px solid #9ad5e7;
}
.panel-title {
  height: 19px;
  border-bottom: 1px solid #5dbcd8;
  font-size: 12px;
  line-height: 14px;
  font-weight: 500;
  color: #000;
}
.panel-body {
  flex: 1;
  display: flex;
  flex-direction: column;
  margin: 14px 18px 0 6px;
  border: 1px solid #5dbcd8;
}
.strip {
  height: 12px;
  flex: none;
  padding-left: 5px;
  background: #dedede;
  font-size: 9px;
  line-height: 11px;
  color: #909090;
}
.dimensions .strip { padding-left: 3px; }
.presets {
  display: grid;
  grid-template-columns: 1fr 1fr;
  column-gap: 4px;
  margin: 4px 3px 5px;
  height: 56px;
  padding-left: 3px;
  border: 1px solid #5dbcd8;
  color: #607d8c;
  font-size: 9px;
  font-weight: 600;
}
.presets button { text-align: left; }
.field { display: flex; align-items: center; height: 19px; margin: 6px 0 6px 4px; color: #222; }
.field label { width: 72px; }
.slider {
  appearance: none;
  width: 82px;
  height: 19px;
  margin: 0 5px 0 0;
  border: 1px solid #5dbcd8;
  background: #fff;
}
.slider::-webkit-slider-thumb {
  appearance: none;
  width: 9px;
  height: 17px;
  background: linear-gradient(#f26a6a 10px, #27a3d0 10px);
  clip-path: polygon(4px 0, 5px 0, 5px 10px, 9px 17px, 0 17px, 4px 10px);
}
.number {
  width: 46px;
  height: 19px;
  padding: 1px 3px 0;
  border: 1px solid #5dbcd8;
  font: 11px/16px "Noto Sans", sans-serif;
  color: #222;
}
.spin { display: flex; flex-direction: column; width: 8px; height: 19px; background: #27a3d0; color: #fff; }
.spin button { flex: 1; font: 6px/9px "DejaVu Sans", sans-serif; }
.unit { margin-left: 2px; }
.apply {
  flex: none;
  height: 26px;
  margin: 0 3px;
  border: 1px solid #5dbcd8;
  font-size: 9px;
  font-weight: 600;
  color: #607d8c;
}
.dimensions { margin: 2px 0 6px 1px; padding-top: 1px; border: 1px solid #d8342c; outline: 1px solid #d8342c55; }
.dimensions .field { margin-left: 2px; }
.dimensions .field:last-child { margin-bottom: 1px; }
.check { display: flex; align-items: center; gap: 3px; margin: 0 3px 2px; }
.check input { appearance: none; width: 17px; height: 17px; margin: 0; border: 1px solid #5dbcd8; background: #fff; }

.brand { display: flex; align-items: center; gap: 3px; padding-right: 2px; }
.lily { width: 21px; height: 20px; fill: #bdbdbd; }
.brand-name { font: italic 21px/20px Lato, sans-serif; color: #bbb; padding-right: 2px; }
.brand button svg { width: 16px; height: 16px; }
```
